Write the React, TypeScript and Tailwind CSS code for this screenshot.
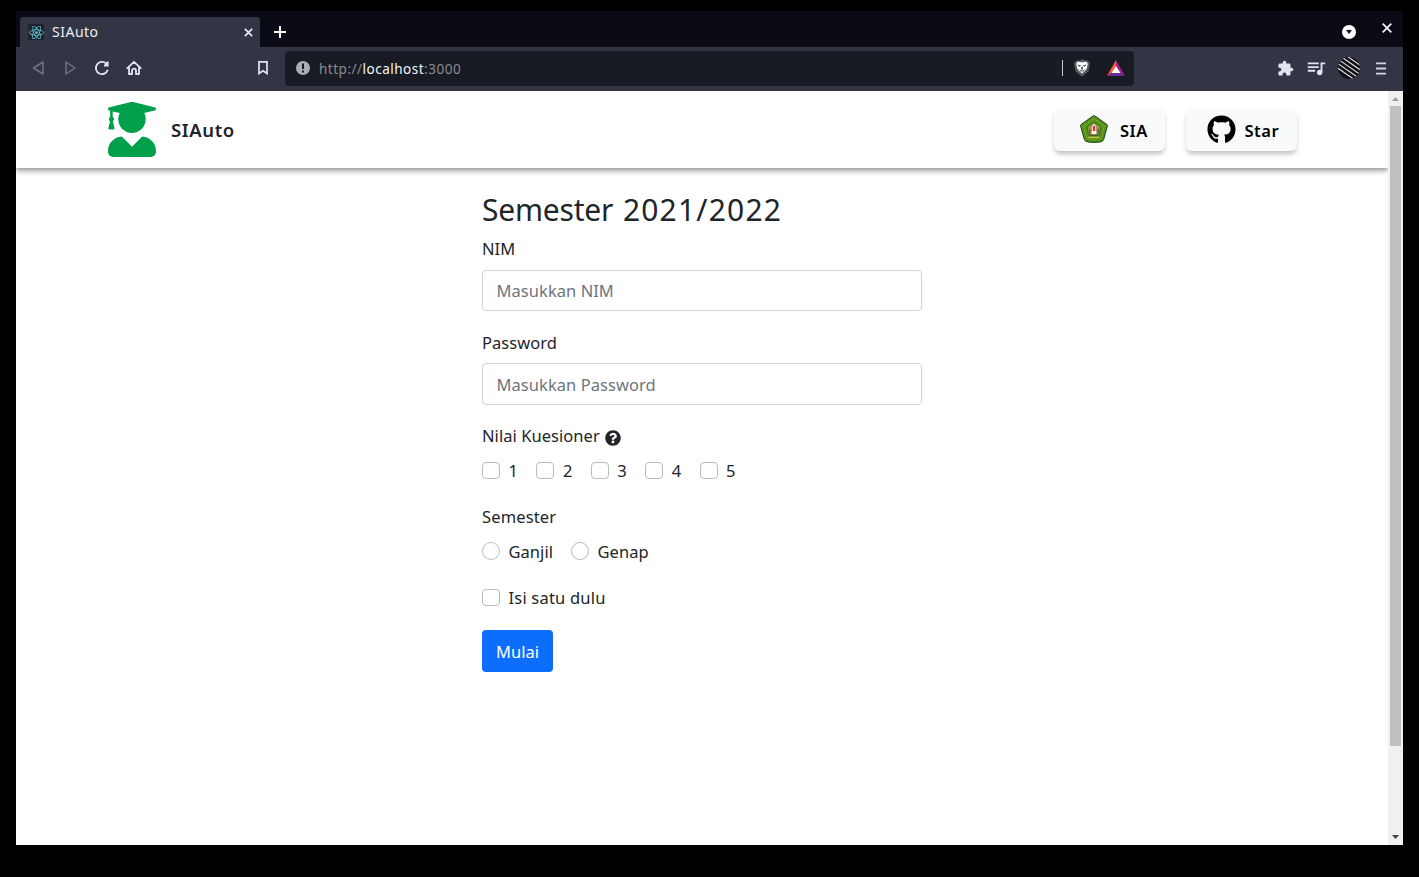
import React from "react";
import { FaGithub, FaQuestionCircle, FaReact, FaUserGraduate } from "react-icons/fa";
import { MdError, MdExtension, MdQueueMusic } from "react-icons/md";

function TabStrip() {
  return (
    <div className="flex h-9 shrink-0 items-end bg-[#0b0b15] pl-1">
      <div className="flex h-[30px] w-60 items-center rounded-t-[3px] bg-[#323644] pl-2">
        <span className="flex size-4 items-center justify-center bg-[#20232a] text-[#61d0de]">
          <FaReact size={15} />
        </span>
        <span className="ml-2 text-[14px] leading-5 tracking-[0.5px] text-[#eceff6]">SIAuto</span>
        <svg className="mr-[7.5px] ml-auto" width="9" height="9" viewBox="0 0 10 10" stroke="#eceef6" strokeWidth="1.8">
          <path d="M1 1l8 8M9 1L1 9" />
        </svg>
      </div>
      <svg className="mb-[9px] ml-[14px]" width="12" height="12" viewBox="0 0 12 12" stroke="#fff" strokeWidth="2">
        <path d="M6 0v12M0 6h12" />
      </svg>
      <div className="mr-[11px] ml-auto flex h-9 items-start gap-[26px]">
        <svg className="mt-[14px]" width="14" height="14" viewBox="0 0 14 14">
          <circle cx="7" cy="7" r="7" fill="#fff" />
          <path d="M4 5h6L7 9z" fill="#11111b" />
        </svg>
        <svg className="mt-3" width="10" height="10" viewBox="0 0 10 10" stroke="#f1f1f6" strokeWidth="1.8">
          <path d="M.7.7l8.6 8.6M9.3.7L.7 9.3" />
        </svg>
      </div>
    </div>
  );
}

function Toolbar() {
  return (
    <div className="flex h-11 shrink-0 items-center bg-[#323644] pb-[2px] pl-4 text-[#e2e4f1]">
      <div className="flex w-[253px] items-center">
        <svg width="13" height="16" viewBox="0 0 13 16" fill="none" stroke="#6f7380" strokeWidth="1.5" strokeLinejoin="round">
          <path d="M11 2v12L1.5 8z" />
        </svg>
        <svg className="ml-5" width="12" height="16" viewBox="0 0 12 16" fill="none" stroke="#6f7380" strokeWidth="1.5" strokeLinejoin="round">
          <path d="M1 2v12L10 8z" />
        </svg>
        <svg className="ml-[17px]" width="16" height="16" viewBox="0 0 16 16" fill="none" stroke="currentColor" strokeWidth="1.8">
          <path d="M13.800 9.800A6.100 6.100 0 1 1 12 3.400" />
          <path d="M14.600 1.600v5H9.800l.5-1.800L13 1.600z" fill="currentColor" stroke="none" />
        </svg>
        <svg className="ml-4" width="16" height="16" viewBox="0 0 16 16" fill="none" stroke="currentColor" strokeWidth="1.8" strokeLinejoin="round" strokeLinecap="round">
          <path d="M1.300 8.200L8 1.800l6.700 6.400M3 7.300V14h3v-3.300a2 2 0 0 1 4 0V14h3V7.300" />
        </svg>
        <svg className="mr-[17px] ml-auto" width="10" height="14" viewBox="0 0 10 14" fill="none" stroke="currentColor" strokeWidth="1.7">
          <path d="M1 .9h8v11.600L5 9.800l-4 2.700z" />
        </svg>
      </div>
      <div className="flex h-[35px] w-[849px] items-center rounded-[4px] bg-[#191b24]">
        <svg className="ml-[11px]" width="14" height="14" viewBox="0 0 14 14">
          <circle cx="7" cy="7" r="7" fill="#a9abb6" />
          <path d="M6 2.600h2v5.400H6zM6 9.400h2v2H6z" fill="#191b24" />
        </svg>
        <div className="ml-[9px] pt-px text-[13.5px] leading-5 tracking-[0.5px] text-[#898b91]">
          http://<span className="text-[#f4f5fa]">localhost</span>:3000
        </div>
        <div className="ml-auto h-4 w-px bg-[#c3c5cf]" />
        <svg className="ml-[11px]" width="16" height="18" viewBox="0 0 16 18">
          <path d="M2 1.500h3L8 .3l3 1.200h3l2 2.800-1.500 8L8 17.800l-6.500-5.500L0 4.300z" fill="#555866" />
          <path d="M2.800 3.600l1.800-1 1.800.6h3.200l1.800-.6 1.800 1 .5 1.800-1.200 4.600-2 2.200L8 14.400l-2.500-2.200-2-2.200-1.200-4.600z" fill="#fff" />
          <path d="M3.600 5.600l3.400.9-1 1.300-1.700-.7zM12.400 5.600l-3.400.9 1 1.300 1.700-.7zM7.400 7.500h1.200l.4 2.500-1 .9-1-.9zM5 10.200l3 1.600 3-1.600-1.700 2.200H6.700z" fill="#454855" />
        </svg>
        <svg className="mr-[9px] ml-[17px]" width="18" height="16" viewBox="0 0 18 16">
          <path d="M9 0L0 16l9-6z" fill="#ff5a35" />
          <path d="M9 0l9 16-9-6z" fill="#a3208b" />
          <path d="M0 16h18l-9-6z" fill="#672a9a" />
          <path d="M9 6l4.500 7h-9z" fill="#fff" />
        </svg>
      </div>
      <div className="mr-[17px] ml-auto flex items-center">
        <MdExtension size={17} />
        <MdQueueMusic className="ml-[11px]" size={22} />
        <svg className="ml-[11px]" width="22" height="22" viewBox="0 0 22 22">
          <defs>
            <clipPath id="avatar">
              <circle cx="11" cy="11" r="11" />
            </clipPath>
          </defs>
          <g clipPath="url(#avatar)">
            <rect width="22" height="22" fill="#111116" />
            <path d="M-2-8.500l26 18M-2-3.900l26 18M-2 .7l26 18M-2 5.300l26 18M-2 9.900l26 18M-2-13.100l26 18" stroke="#e4e6ea" strokeWidth="1.1" />
          </g>
        </svg>
        <svg className="ml-4" width="10" height="13" viewBox="0 0 10 13" stroke="#d1d3e0" strokeWidth="1.8">
          <path d="M0 1.400h10M0 6.500h10M0 11.600h10" />
        </svg>
      </div>
    </div>
  );
}

function Crest() {
  return (
    <svg className="mb-px" width="28" height="28" viewBox="0 0 28 28">
      <path d="M14 .7q.6 0 1 .3L27 9.600q.6.5.4 1.400L23.600 24.600q-.3 1.200-1.400 1.600-2 1.200-8.200 1.200t-8.200-1.200q-1.100-.4-1.400-1.600L.6 11Q.4 10.100 1 9.600L13 1q.4-.3 1-.3z" fill="#4d9417" stroke="#23401a" strokeWidth="1" />
      <path d="M14 3.600L24.400 11l-3.200 12q-7.200 2-14.400 0L3.600 11z" fill="none" stroke="#b8a83a" strokeWidth=".9" strokeDasharray="1.5 1" />
      <path d="M14 7l6.700 5-1.200 8.500h-11L7.300 12z" fill="#94994c" stroke="#395f1b" strokeWidth=".8" />
      <path d="M11.500 20l.5-8.500L14 9l2 2.500.5 8.500z" fill="#fff2e6" />
      <path d="M12.800 11h2.400v5h-2.400z" fill="#dd3131" />
      <path d="M9.800 13.800v5M18.200 13.800v5M10 19.800h8" stroke="#56461e" strokeWidth="1" />
      <path d="M8.500 22.300h11" stroke="#d0c252" strokeWidth="1.2" />
    </svg>
  );
}

function NavButton({ label, children, pad }: { label: string; children: React.ReactNode; pad: string }) {
  return (
    <button className={`flex h-[43px] w-[111px] items-center rounded-[6px] bg-[#f8fafb] shadow-[0_4px_5px_-1px_rgba(0,0,0,0.25)] ${pad}`}>
      {children}
      <span className="pt-[2px] text-[16.5px] leading-6 font-semibold tracking-[0.5px] text-black">{label}</span>
    </button>
  );
}

function Navbar() {
  return (
    <header className="relative flex h-[77px] shrink-0 items-center bg-white pr-[91px] pl-[92px] shadow-[0_2px_6px_rgba(0,0,0,0.5)]">
      <FaUserGraduate className="mb-px h-[55px] w-[48px] text-[#00a04b]" />
      <span className="ml-[15px] text-[18.5px] leading-7 font-semibold tracking-[0.6px] text-[#212529]">SIAuto</span>
      <div className="ml-auto flex gap-[21px]">
        <NavButton label="SIA" pad="pl-[26px] gap-[12px]">
          <Crest />
        </NavButton>
        <NavButton label="Star" pad="pl-[20.5px] gap-[9px]">
          <FaGithub size={29} className="text-black" />
        </NavButton>
      </div>
    </header>
  );
}

function Choice({ type, label, width }: { type: "checkbox" | "radio"; label: string; width: string }) {
  const shape = type === "radio" ? "rounded-full mb-[2px] h-[18px]" : "rounded-[4px] mb-px h-[17px]";
  return (
    <label className={`flex h-[26px] items-center gap-[8.5px] ${width}`}>
      <input type={type} name={type === "radio" ? "semester" : label} className={`w-[18px] shrink-0 appearance-none border border-[#b9bbbd] bg-white ${shape}`} />
      <span className="whitespace-nowrap">{label}</span>
    </label>
  );
}

function Form() {
  return (
    <main className="ml-[466px] flex w-[440px] flex-col items-start pt-5 text-[16.5px] leading-[26px] tracking-[0.05px] text-[#212529]">
      <h1 className="h-11 text-[30px] leading-[44px] tracking-[-0.2px] whitespace-nowrap">
        Semester <span className="ml-[2px] tracking-[1.2px]">2021/2022</span>
      </h1>
      <label className="mt-1 h-[26px]">NIM</label>
      <input placeholder="Masukkan NIM" className="mt-2 h-[41px] w-full rounded-[4px] border border-[#ced4da] px-[13.5px] placeholder:text-[#6c757d]" />
      <label className="mt-[19px] h-[26px]">Password</label>
      <input type="password" placeholder="Masukkan Password" className="mt-[7px] h-[42px] w-full rounded-[4px] border border-[#ced4da] px-[13.5px] placeholder:text-[#6c757d]" />
      <div className="mt-[18px] flex h-[26px] items-center gap-[5px]">
        Nilai Kuesioner
        <FaQuestionCircle size={16} className="mt-[3px]" />
      </div>
      <div className="mt-[9px] flex">
        {["1", "2", "3", "4", "5"].map((n) => (
          <Choice key={n} type="checkbox" label={n} width="w-[54.4px]" />
        ))}
      </div>
      <div className="mt-5 h-[26px] tracking-[0.15px]">Semester</div>
      <div className="mt-[9px] flex">
        <Choice type="radio" label="Ganjil" width="w-[89px]" />
        <Choice type="radio" label="Genap" width="w-[89px]" />
      </div>
      <div className="mt-5 tracking-[0.2px]">
        <Choice type="checkbox" label="Isi satu dulu" width="w-[140px]" />
      </div>
      <button className="mt-[19px] h-[42px] w-[71px] rounded-[4px] bg-[#0d6efd] pt-0.5 text-white">Mulai</button>
    </main>
  );
}

function Scrollbar() {
  return (
    <div className="flex w-[15px] shrink-0 flex-col items-center bg-[#f0f0f1]">
      <svg className="mt-[6px]" width="7" height="4" viewBox="0 0 7 4" fill="#a1a1a1">
        <path d="M0 4L3.500 0 7 4z" />
      </svg>
      <div className="mt-[5px] h-[640px] w-[11px] bg-[#c0c0c0]" />
      <svg className="mt-auto mb-[6px]" width="7" height="4" viewBox="0 0 7 4" fill="#424242">
        <path d="M0 0h7L3.500 4z" />
      </svg>
    </div>
  );
}

export default function App() {
  return (
    <div className="h-[877px] w-[1419px] overflow-hidden bg-black px-4 pt-[11px] pb-8 font-['Noto_Sans',sans-serif]">
      <div className="flex h-[834px] flex-col">
        <TabStrip />
        <Toolbar />
        <div className="flex min-h-0 flex-1 bg-white">
          <div className="flex min-w-0 flex-1 flex-col overflow-hidden">
            <Navbar />
            <Form />
          </div>
          <Scrollbar />
        </div>
      </div>
    </div>
  );
}
